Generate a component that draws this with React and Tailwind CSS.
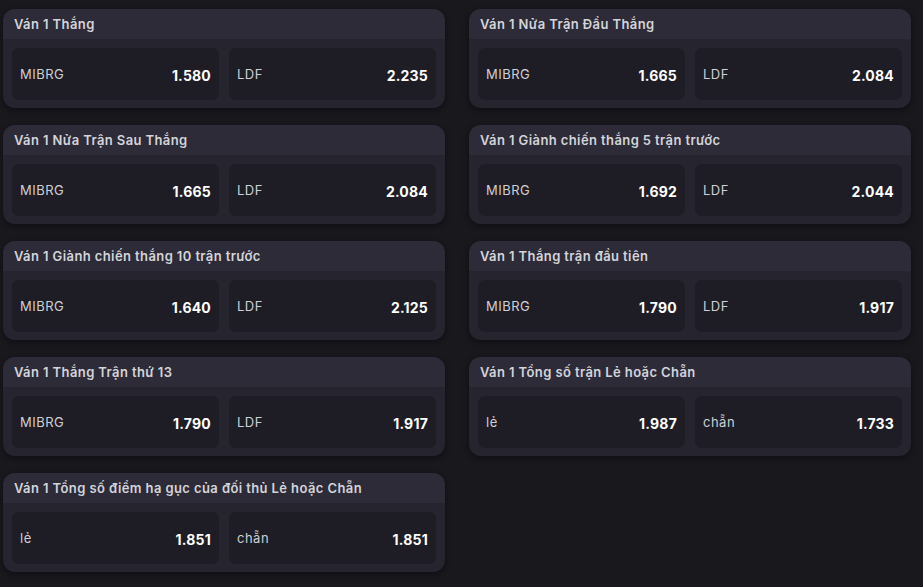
const markets = [
  { t: "Ván 1 Thắng", a: ["MIBRG", "1.580"], b: ["LDF", "2.235"] },
  { t: "Ván 1 Nửa Trận Đầu Thắng", a: ["MIBRG", "1.665"], b: ["LDF", "2.084"] },
  { t: "Ván 1 Nửa Trận Sau Thắng", a: ["MIBRG", "1.665"], b: ["LDF", "2.084"] },
  { t: "Ván 1 Giành chiến thắng 5 trận trước", a: ["MIBRG", "1.692"], b: ["LDF", "2.044"] },
  { t: "Ván 1 Giành chiến thắng 10 trận trước", a: ["MIBRG", "1.640"], b: ["LDF", "2.125"] },
  { t: "Ván 1 Thắng trận đầu tiên", a: ["MIBRG", "1.790"], b: ["LDF", "1.917"] },
  { t: "Ván 1 Thắng Trận thứ 13", a: ["MIBRG", "1.790"], b: ["LDF", "1.917"] },
  { t: "Ván 1 Tổng số trận Lẻ hoặc Chẵn", a: ["lẻ", "1.987"], b: ["chẵn", "1.733"] },
  { t: "Ván 1 Tổng số điểm hạ gục của đối thủ Lẻ hoặc Chẵn", a: ["lẻ", "1.851"], b: ["chẵn", "1.851"] },
];

function Cell({ label, value }) {
  return (
    <div className="flex-1 h-[52px] rounded-[7px] bg-[#1e1d25] flex items-center justify-between px-2">
      <span className="text-[13px] text-[#cfcfd6] tracking-[0.5px] pt-[1px]">{label}</span>
      <span className="text-[14px] font-bold text-white tracking-[0.2px] pt-[2px]">{value}</span>
    </div>
  );
}

function Card({ m }) {
  return (
    <div className="rounded-[12px] bg-[#26252f] overflow-hidden shadow-[0_2px_6px_rgba(0,0,0,0.4)]">
      <div className="h-[30px] bg-[#2c2b37] flex items-center px-[11px] pt-[2px]">
        <span className="text-[13px] font-semibold text-[#d4d4da] tracking-[0.4px]">{m.t}</span>
      </div>
      <div className="flex gap-[10px] px-[9px] pt-[9px] pb-[8px]">
        <Cell label={m.a[0]} value={m.a[1]} />
        <Cell label={m.b[0]} value={m.b[1]} />
      </div>
    </div>
  );
}

export default function App() {
  return (
    <div
      className="w-[923px] h-[587px] bg-[#18181d] overflow-hidden pl-[3px] pr-[12px] pt-[9px]"
      style={{ fontFamily: "Inter, 'Noto Sans', sans-serif" }}
    >
      <div className="grid grid-cols-2 gap-x-[24px] gap-y-[17px]">
        {markets.map((m, i) => (
          <Card key={i} m={m} />
        ))}
      </div>
    </div>
  );
}
